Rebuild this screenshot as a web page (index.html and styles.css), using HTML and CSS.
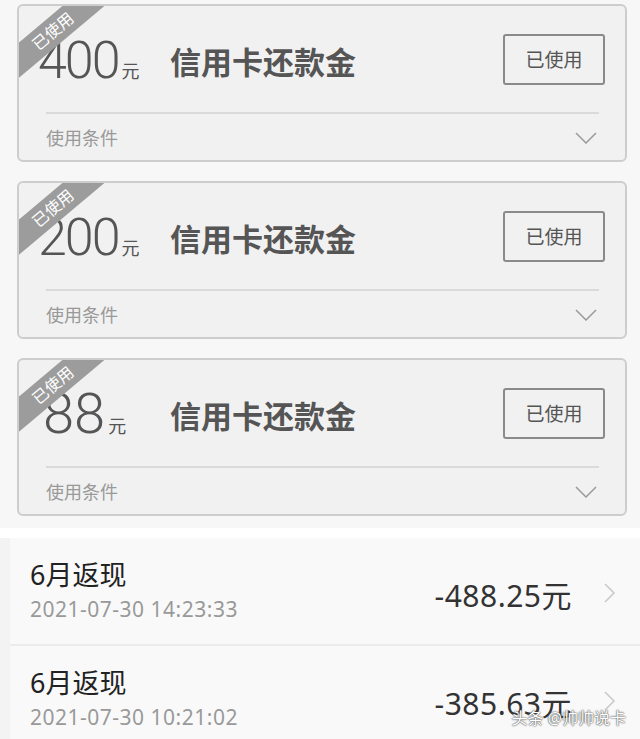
FILE: index.html
```html
<!DOCTYPE html>
<html lang="zh-CN">
<head>
    <meta charset="UTF-8">
    <meta name="viewport" content="width=device-width, initial-scale=1.0">
    <title>还款金</title>
    <link rel="stylesheet" href="styles.css">
</head>
<body>
    <div class="coupons">
        <div class="card">
            <div class="tag">已使用</div>
            <div class="card-top">
                <div class="amount"><span class="num">400</span><span class="unit">元</span></div>
                <div class="name">信用卡还款金</div>
                <div class="state">已使用</div>
            </div>
            <div class="card-bottom">
                <span>使用条件</span>
                <svg class="arrow" width="22" height="12" viewBox="0 0 22 12"><path d="M1 1 L11 11 L21 1" fill="none" stroke="#9a9a9a" stroke-width="1.5"/></svg>
            </div>
        </div>
        <div class="card">
            <div class="tag">已使用</div>
            <div class="card-top">
                <div class="amount"><span class="num">200</span><span class="unit">元</span></div>
                <div class="name">信用卡还款金</div>
                <div class="state">已使用</div>
            </div>
            <div class="card-bottom">
                <span>使用条件</span>
                <svg class="arrow" width="22" height="12" viewBox="0 0 22 12"><path d="M1 1 L11 11 L21 1" fill="none" stroke="#9a9a9a" stroke-width="1.5"/></svg>
            </div>
        </div>
        <div class="card">
            <div class="tag">已使用</div>
            <div class="card-top">
                <div class="amount"><span class="num wide">88</span><span class="unit">元</span></div>
                <div class="name">信用卡还款金</div>
                <div class="state">已使用</div>
            </div>
            <div class="card-bottom">
                <span>使用条件</span>
                <svg class="arrow" width="22" height="12" viewBox="0 0 22 12"><path d="M1 1 L11 11 L21 1" fill="none" stroke="#9a9a9a" stroke-width="1.5"/></svg>
            </div>
        </div>
    </div>
    <div class="gap"></div>
    <div class="records">
        <div class="row">
            <div class="info">
                <div class="title">6月返现</div>
                <div class="date">2021-07-30 14:23:33</div>
            </div>
            <div class="money">-488.25元</div>
            <svg class="more" width="12" height="20" viewBox="0 0 12 20"><path d="M1 1 L10 10 L1 19" fill="none" stroke="#c8c8c8" stroke-width="1.5"/></svg>
        </div>
        <div class="row">
            <div class="info">
                <div class="title">6月返现</div>
                <div class="date">2021-07-30 10:21:02</div>
            </div>
            <div class="money">-385.63元</div>
            <svg class="more" width="12" height="20" viewBox="0 0 12 20"><path d="M1 1 L10 10 L1 19" fill="none" stroke="#c8c8c8" stroke-width="1.5"/></svg>
        </div>
    </div>
    <div class="mark">头条 @帅帅说卡</div>
</body>
</html>
```

FILE: styles.css
```css
body {
    margin: 0;
    background: #f7f7f7;
    font-family: "Noto Sans", "Noto Sans CJK SC", sans-serif;
    height: 739px;
    overflow: hidden;
    position: relative;
}
.coupons {
    padding: 4px 13px 0 17px;
    display: flex;
    flex-direction: column;
    gap: 19px;
}
.card {
    position: relative;
    overflow: hidden;
    height: 154px;
    background: #f1f1f1;
    border: 2px solid #cdcdcd;
    border-radius: 6px;
}
.tag {
    position: absolute;
    top: 12px;
    left: -32px;
    width: 132px;
    height: 27px;
    line-height: 27px;
    background: #9c9c9c;
    color: #fff;
    font-size: 16px;
    text-align: center;
    transform: rotate(-40deg);
}
.card-top {
    height: 106px;
    display: flex;
    align-items: center;
    padding: 0 20px 0 19px;
}
.amount {
    width: 132px;
    color: #555;
    padding-top: 2px;
}
.num {
    font-family: Roboto, "Noto Sans", sans-serif;
    font-weight: 300;
    font-size: 52px;
    letter-spacing: -2px;
}
.num.wide {
    font-size: 56px;
    letter-spacing: 0;
    margin-left: 5px;
}
.unit {
    font-size: 18px;
    margin-left: 3px;
}
.name {
    flex: 1;
    font-size: 31px;
    font-weight: bold;
    color: #555;
    padding-top: 2px;
}
.state {
    width: 98px;
    height: 47px;
    border: 2px solid #8a8a8a;
    border-radius: 3px;
    display: flex;
    align-items: center;
    justify-content: center;
    font-size: 19px;
    color: #555;
}
.card-bottom {
    margin: 0 26px 0 27px;
    border-top: 2px solid #dadada;
    height: 46px;
    display: flex;
    align-items: center;
    justify-content: space-between;
    font-size: 18px;
    color: #999;
}
.arrow {
    margin-right: 2px;
    margin-top: 2px;
}
.gap {
    height: 10px;
    margin-top: 12px;
    background: #fff;
}
.records {
    padding-left: 10px;
    background: #f3f3f3;
}
.row {
    height: 106px;
    background: #f9f9f9;
    border-bottom: 2px solid #ececec;
    display: flex;
    align-items: center;
    padding: 0 24px 0 20px;
}
.info {
    flex: 1;
}
.title {
    font-size: 27px;
    color: #222;
    line-height: 34px;
}
.date {
    font-size: 21px;
    letter-spacing: 0.5px;
    color: #999;
    line-height: 30px;
    margin-top: 2px;
}
.money {
    font-size: 30px;
    letter-spacing: 0.5px;
    color: #333;
    margin-right: 32px;
    padding-top: 6px;
}
.more {
    padding-top: 4px;
}
.mark {
    position: absolute;
    right: 14px;
    bottom: 10px;
    font-size: 16px;
    color: #fff;
    text-shadow: 0 0 2px #555, 0 0 1px #333;
}
```
